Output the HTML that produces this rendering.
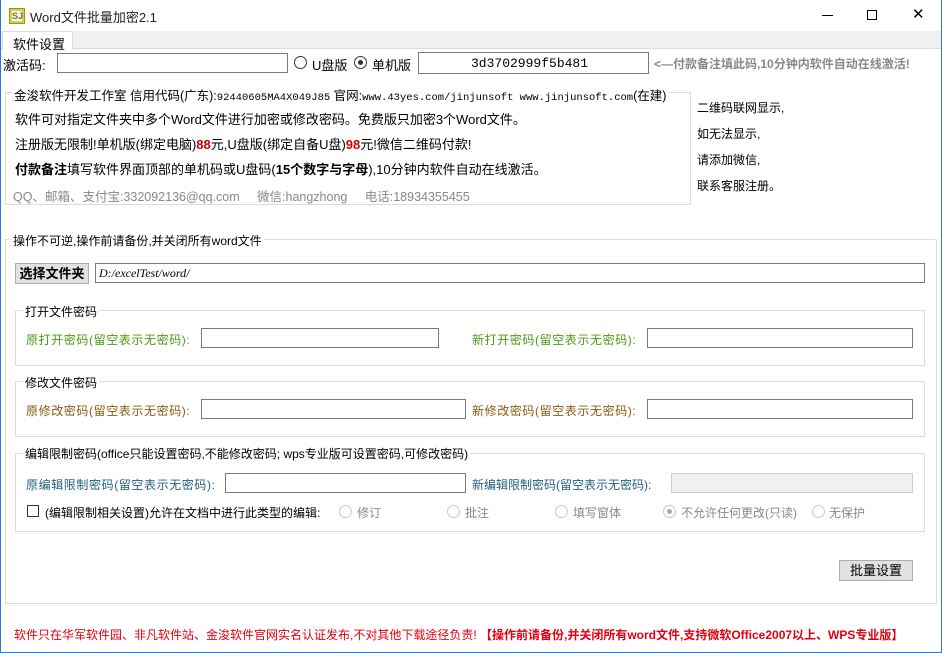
<!DOCTYPE html>
<html><head><meta charset="utf-8"><style>
*{box-sizing:border-box;margin:0;padding:0}
body{width:942px;height:653px;background:#fff;position:relative;overflow:hidden;font-family:"Liberation Sans","Noto Sans CJK SC",sans-serif;font-size:12px;color:#000}
.a{position:absolute;white-space:nowrap}
.inp{position:absolute;border:1px solid #7a7a7a;background:#fff;height:20px}
.gb{position:absolute;border:1px solid #dcdcdc}
.lg{position:absolute;background:#fff;padding:0 2px;white-space:nowrap}
.rad{position:absolute;width:13px;height:13px;border:1px solid #333;border-radius:50%;background:#fff}
.rd{position:absolute;width:13px;height:13px;border:1px solid #c8c8c8;border-radius:50%;background:#fff}
.btn{position:absolute;background:#e1e1e1;border:1px solid #adadad;text-align:center}
.m{font-family:"Liberation Mono","Noto Sans CJK SC",monospace}
.l{letter-spacing:0.6px}
</style></head><body>
<div style="position:absolute;left:0;top:0;width:1px;height:653px;background:#2b79d0"></div>
<div style="position:absolute;right:0;top:0;width:1px;height:653px;background:#2b79d0"></div>
<div style="position:absolute;left:0;bottom:0;width:942px;height:1px;background:#2b79d0"></div>
<!-- title -->
<div class="a" style="left:9px;top:8px;width:16px;height:16px;background:#c8d84a;border:1px solid #8a9a20"><div style="position:absolute;left:2px;top:2px;width:10px;height:10px;background:#fff;font-size:9px;line-height:10px;color:#a06010;font-weight:bold">SJ</div></div>
<div class="a" style="left:30px;top:7px;font-size:13px;color:#222">Word文件批量加密2.1</div>
<div class="a" style="left:822px;top:15px;width:11px;height:1px;background:#000"></div>
<div class="a" style="left:867px;top:10px;width:10px;height:10px;border:1px solid #000"></div>
<div class="a" style="left:912px;top:5px;font-size:15px;font-weight:100">✕</div>
<!-- tab strip -->
<div class="a" style="left:1px;top:31px;width:940px;height:18px;background:#f0f0f0;border-bottom:1px solid #dcdcdc"></div>
<div class="a" style="left:2px;top:31px;width:71px;height:19px;background:#fff;border:1px solid #dcdcdc;border-bottom:none;padding:2px 0 0 10px;font-size:13px">软件设置</div>
<!-- activation row -->
<div class="a" style="left:3px;top:55px;font-size:13px">激活码:</div>
<div class="inp" style="left:57px;top:53px;width:231px"></div>
<div class="rad" style="left:294px;top:56px"></div>
<div class="a" style="left:312px;top:55px;font-size:13px">U盘版</div>
<div class="rad" style="left:354px;top:56px"><div style="position:absolute;left:3px;top:3px;width:5px;height:5px;border-radius:50%;background:#333"></div></div>
<div class="a" style="left:372px;top:55px;font-size:13px">单机版</div>
<div class="inp m" style="left:418px;top:52px;width:231px;height:22px;padding:3px 0 0 52px;font-size:13px">3d3702999f5b481</div>
<div class="a" style="left:654px;top:55px;color:#888;font-weight:bold;font-size:12px">&lt;—付款备注填此码,10分钟内软件自动在线激活!</div>
<!-- info group -->
<div class="gb" style="left:5px;top:92px;width:686px;height:113px"></div>
<div class="lg" style="left:12px;top:85px;font-size:12.5px">金浚软件开发工作室 信用代码(广东):<span class="m" style="font-size:10.5px">92440605MA4X049J85</span> 官网:<span class="m" style="font-size:10.5px">www.43yes.com/jinjunsoft  www.jinjunsoft.com</span>(在建)</div>
<div class="a" style="left:15px;top:109px;font-size:13px">软件可对指定文件夹中多个Word文件进行加密或修改密码。免费版只加密3个Word文件。</div>
<div class="a" style="left:15px;top:134px;font-size:13px">注册版无限制!单机版(绑定电脑)<b style="color:#c00">88</b>元,U盘版(绑定自备U盘)<b style="color:#c00">98</b>元!微信二维码付款!</div>
<div class="a" style="left:15px;top:159px;font-size:13px"><b>付款备注</b>填写软件界面顶部的单机码或U盘码(<b>15个数字与字母</b>),10分钟内软件自动在线激活。</div>
<div class="a" style="left:13px;top:186px;color:#888;font-size:12.5px">QQ、邮箱、支付宝:332092136@qq.com &nbsp;&nbsp;&nbsp; 微信:hangzhong &nbsp;&nbsp;&nbsp; 电话:18934355455</div>
<div class="a" style="left:697px;top:99px">二维码联网显示,</div>
<div class="a" style="left:697px;top:125px">如无法显示,</div>
<div class="a" style="left:697px;top:151px">请添加微信,</div>
<div class="a" style="left:697px;top:177px">联系客服注册。</div>
<!-- main group -->
<div class="gb" style="left:5px;top:239px;width:932px;height:365px"></div>
<div class="lg" style="left:11px;top:232px">操作不可逆,操作前请备份,并关闭所有word文件</div>
<div class="btn" style="left:15px;top:263px;width:74px;height:21px;font-weight:bold;font-size:13px;line-height:19px">选择文件夹</div>
<div class="inp" style="left:95px;top:263px;width:830px;padding:2px 0 0 3px;font-family:'Liberation Serif',serif;font-style:italic;font-size:12px">D:/excelTest/word/</div>

<div class="gb" style="left:15px;top:310px;width:910px;height:56px"></div>
<div class="lg" style="left:23px;top:303px">打开文件密码</div>
<div class="a l" style="left:26px;top:331px;color:#4a9a10">原打开密码(留空表示无密码):</div>
<div class="inp" style="left:201px;top:328px;width:238px"></div>
<div class="a l" style="left:472px;top:331px;color:#4a9a10">新打开密码(留空表示无密码):</div>
<div class="inp" style="left:647px;top:328px;width:266px"></div>

<div class="gb" style="left:15px;top:381px;width:910px;height:56px"></div>
<div class="lg" style="left:23px;top:374px">修改文件密码</div>
<div class="a l" style="left:26px;top:402px;color:#8a5a10">原修改密码(留空表示无密码):</div>
<div class="inp" style="left:201px;top:399px;width:265px"></div>
<div class="a l" style="left:472px;top:402px;color:#8a5a10">新修改密码(留空表示无密码):</div>
<div class="inp" style="left:647px;top:399px;width:266px"></div>

<div class="gb" style="left:15px;top:453px;width:910px;height:79px"></div>
<div class="lg" style="left:23px;top:445px">编辑限制密码(office只能设置密码,不能修改密码; wps专业版可设置密码,可修改密码)</div>
<div class="a l" style="left:26px;top:476px;color:#1f5f80">原编辑限制密码(留空表示无密码):</div>
<div class="inp" style="left:225px;top:473px;width:241px"></div>
<div class="a" style="left:472px;top:476px;color:#1f5f80">新编辑限制密码(留空表示无密码):</div>
<div class="inp" style="left:671px;top:473px;width:242px;background:#f0f0f0;border-color:#ccc"></div>
<div class="a" style="left:27px;top:505px;width:12px;height:12px;border:1px solid #333"></div>
<div class="a" style="left:45px;top:504px">(编辑限制相关设置)允许在文档中进行此类型的编辑:</div>
<div class="rd" style="left:339px;top:505px"></div><div class="a" style="left:357px;top:504px;color:#888">修订</div>
<div class="rd" style="left:447px;top:505px"></div><div class="a" style="left:465px;top:504px;color:#888">批注</div>
<div class="rd" style="left:555px;top:505px"></div><div class="a" style="left:573px;top:504px;color:#888">填写窗体</div>
<div class="rd" style="left:663px;top:505px"><div style="position:absolute;left:3px;top:3px;width:5px;height:5px;border-radius:50%;background:#aaa"></div></div><div class="a" style="left:681px;top:504px;color:#888">不允许任何更改(只读)</div>
<div class="rd" style="left:812px;top:505px"></div><div class="a" style="left:829px;top:504px;color:#888">无保护</div>

<div class="btn" style="left:839px;top:560px;width:74px;height:21px;font-size:13px;line-height:19px">批量设置</div>
<div class="a" style="left:14px;top:626px;color:#e00010">软件只在华军软件园、非凡软件站、金浚软件官网实名认证发布,不对其他下载途径负责! <b>【操作前请备份,并关闭所有word文件,支持微软Office2007以上、WPS专业版】</b></div>
</body></html>
